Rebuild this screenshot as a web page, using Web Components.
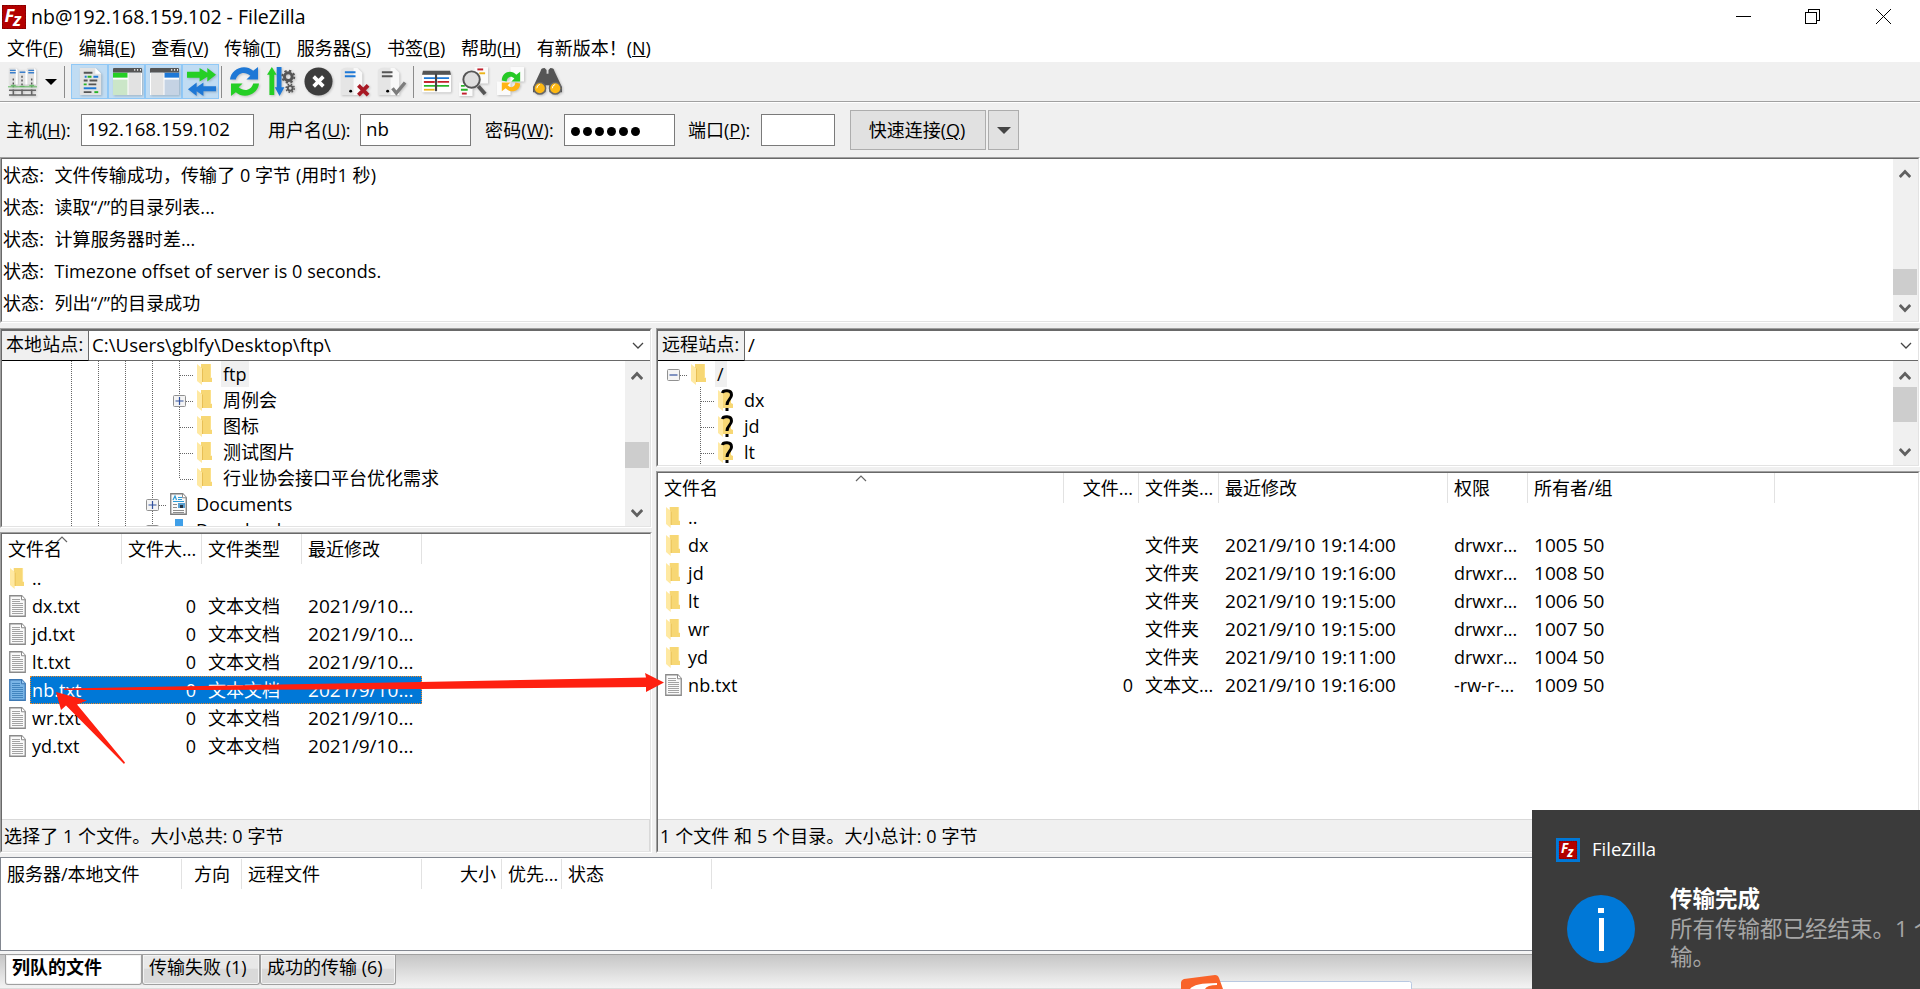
<!DOCTYPE html>
<html lang="zh-CN">
<head>
<meta charset="utf-8">
<title>nb@192.168.159.102 - FileZilla</title>
<style>
  html, body { margin: 0; height: 100%; }
  body {
    width: 1920px;
    height: 989px;
    overflow: hidden;
    background: #f0f0f0;
    color: #000;
    font: 18px/24px "Open Sans", "Noto Sans CJK SC", sans-serif;
  }
</style>
</head>
<body>
<fz-app></fz-app>

<script>
const ICONS = {
  logo: ['0 0 24 24', `
    <rect width="24" height="24" fill="#b30000"/>
    <rect x=".5" y=".5" width="23" height="23" fill="none" stroke="#7d0000" stroke-dasharray="2 1"/>
    <g fill="#fff" font-family="Open Sans" font-weight="700" font-style="italic">
      <text x="2.500" y="16.500" font-size="18">F</text><text x="11" y="21" font-size="18">z</text>
    </g>`],
  folder: ['0 0 15 21', `
    <path d="M4 0h9v13l2 1v4H4z" fill="#f7d774"/><path d="M13 0h1v13h-1z" fill="#fbe08a"/>
    <path d="M4 3l2 2v13H4z" fill="#e8bf55"/>
    <path d="M0 0l5 4v17l-5-4z" fill="#ffe9a2"/>`],
  unknown: ['0 0 15 21', `
    <path d="M4 0h9v13l2 1v4H4z" fill="#f7d774"/>
    <path d="M0 0l5 4v17l-5-4z" fill="#ffe9a2"/>
    <path d="M4.500 3C5 .300 13.500-.700 13.500 5c0 4-4.500 4.500-4.500 10" fill="none" stroke="#000" stroke-width="3"/>
    <path d="M7.500 18h3v3h-3z"/>`],
  text: ['0 0 17 22', `
    <path d="M.75.75h12l3.500 3.800v16.700H.75z" fill="#fafafa" stroke="#8a8a8a" stroke-width="1.300"/>
    <path d="M12.500.75v4h4" fill="#fff" stroke="#8a8a8a"/>
    <path d="M3 4.500h8M3 6.500h8M3 8.500h11M3 10.500h11M3 12.500h11M3 14.500h11M3 16.500h11M3 18.500h11" stroke="#a3a3a3"/>`],
  textsel: ['0 0 17 22', `
    <path d="M.75.75h12l3.500 3.800v16.700H.75z" fill="#7ab5e6" stroke="#3c78b4" stroke-width="1.300"/>
    <path d="M12.500.75v4h4" fill="#9ccaf0" stroke="#3c78b4"/>
    <path d="M3 4.500h8M3 6.500h8M3 8.500h11M3 10.500h11M3 12.500h11M3 14.500h11M3 16.500h11M3 18.500h11" stroke="#4285bf"/>`],
  documents: ['0 0 17 22', `
    <path d="M.75.75h12l3.500 3.800v16.700H.75z" fill="#fafafa" stroke="#7d7d7d" stroke-width="1.300"/>
    <path d="M12.500.75v4h4" fill="#fff" stroke="#8a8a8a"/>
    <path d="M3 7l2-4 1.500 4M8 4.500h4M8 6.500h4M3 8.500h11" fill="none" stroke="#2e9bd6" stroke-width="1.200"/>
    <path d="M8 10h7v5H8z" fill="#5a9fd0"/><path d="M10 12h3v3h-3z" fill="#234"/>
    <path d="M3 11.500h4M3 14.500h4M3 17.500h11M3 19.500h11" stroke="#8c8c8c"/>`],
  downloads: ['0 0 17 22', `<path d="M5 0h8v9h4l-8 8-9-8h5z" fill="#3f9fe8"/>`],
  site: ['0 0 30 30', `
    <g fill="#e2e2e2"><path d="M1 1h7l2 2v15H1zM11 3h7l2 2v13h-9zM20 1h7l2 2v15h-9z"/></g>
    <path d="M8 1l2 2v15H8zM18 3l2 2v13h-2zM27 1l2 2v15h-2z" fill="#fff"/>
    <path d="M2 3.500h6M2 6h6M12 5.500h6M21 3.500h6M21 6h6" stroke="#3b7fcb" stroke-width="1.500"/>
    <path d="M5.500 12v9M14.500 9v12M24.500 12v9" stroke="#555" stroke-width="1.500" stroke-dasharray="2 2"/>
    <path d="M3 19h5M12 20h5M22 19h5M0 20.500h30" stroke="#59b759"/>
    <path d="M5.500 23v6M14.500 23v6M24.500 23v6M1 24h28M1 29h28" stroke="#666" stroke-width="1.600"/>`],
  log: ['0 0 30 30', `
    <path d="M4 1h16l6 6v22H4z" fill="#e3e3e3"/><path d="M20 1l6 6h-6z" fill="#fff"/>
    <path d="M8 6h9M8 14h4" stroke="#555" stroke-width="2"/><path d="M9 10h2M18 10h5" stroke="#1e78d6" stroke-width="2"/>
    <path d="M12 10h4M8 18h3" stroke="#28b428" stroke-width="2"/><path d="M14 14h8M13 18h8M8 26h8" stroke="#555" stroke-width="2"/>
    <path d="M8 22h13" stroke="#1e78d6" stroke-width="2"/><path d="M19 26h4" stroke="#28b428" stroke-width="2"/>`],
  local: ['0 0 30 30', `
    <path d="M0 2q0-1 1-1h28q1 0 1 1v4H0z" fill="#555"/>
    <path d="M22 3h1M25 3h1M28 3h1" stroke="#fff" stroke-width="2"/>
    <path d="M0 6h30v23H0z" fill="#fff"/><path d="M0 6h15v5H0z" fill="#25cf25"/>
    <path d="M0 13h15v16H0z" fill="#cbe6c8"/><path d="M16 6h13v23H16z" fill="#e2e2e2"/>`],
  remote: ['0 0 30 30', `
    <path d="M0 2q0-1 1-1h28q1 0 1 1v4H0z" fill="#555"/>
    <path d="M22 3h1M25 3h1M28 3h1" stroke="#fff" stroke-width="2"/>
    <path d="M0 6h30v23H0z" fill="#fff"/><path d="M1 6h13v23H1z" fill="#e2e2e2"/>
    <path d="M15 6h15v5H15z" fill="#1e78d6"/><path d="M15 13h15v16H15z" fill="#c5d3e4"/>`],
  queue: ['0 0 30 30', `
    <path d="M0 5h13V1l8 5V1l9 7-9 7v-5l-8 5v-4H0z" fill="#25cf25"/>
    <path d="M30 20H17v-4l-7 5v-5l-9 7 9 7v-5l7 5v-5h13z" fill="#1e78d6"/>`],
  refresh: ['0 0 30 30', `
    <path d="M0 13C1 2 15-4 24 4l5-4v13H17l4-4C15 4 8 6 6 13z" fill="#1e78d6"/>
    <path d="M30 17c-1 11-15 17-24 9l-5 4V17h12l-4 4c6 5 13 3 15-4z" fill="#25cf25"/>`],
  process: ['0 0 30 30', `
    <path d="M5 0l5 8H7.500v21h-5V8H0z" fill="#25cf25"/><path d="M10 0h5v21h3l-5 9-5-9h2z" fill="#1e78d6"/>
    <g fill="none" stroke="#555"><circle cx="22" cy="10" r="4" stroke-width="3"/>
    <circle cx="22" cy="10" r="6.200" stroke-width="2" stroke-dasharray="2.430 2.430"/>
    <circle cx="24" cy="22" r="2.500" stroke-width="2"/><circle cx="24" cy="22" r="4.200" stroke-width="1.500" stroke-dasharray="1.650 1.650"/></g>`],
  cancel: ['0 0 30 30', `<circle cx="15" cy="15" r="14.500" fill="#3d3d3d"/>
    <path d="M10 10l10 10M20 10L10 20" stroke="#fff" stroke-width="3.800"/>`],
  disconnect: ['0 0 30 30', `
    <path d="M0 3q3-3 7-2h10v28H0z" fill="#e5e5e5"/><path d="M13 1h4l5 5v23h-9z" fill="#f9f9f9"/>
    <path d="M4 5.500h11M4 9.500h11" stroke="#1e78d6" stroke-width="2"/><circle cx="10" cy="25" r="1.500"/>
    <path d="M18 19l10 10M28 19L18 29" stroke="#a81824" stroke-width="4"/>`],
  reconnect: ['0 0 30 30', `
    <path d="M0 3q3-3 7-2h10v28H0z" fill="#e5e5e5"/><path d="M13 1h4l5 5v23h-9z" fill="#f9f9f9"/>
    <path d="M4 5.500h11M4 9.500h11" stroke="#555" stroke-width="2"/><circle cx="10" cy="25" r="1.500"/>
    <path d="M15 22l4 5 9-11" fill="none" stroke="#7d7d7d" stroke-width="3.500"/>`],
  filter: ['0 0 30 30', `
    <path d="M0 8h30v17q0 1-1 1H1q-1 0-1-1z" fill="#fff"/><path d="M1 4h28l1 4H0z" fill="#555"/>
    <path d="M2 11.500h26" stroke="#1e78d6" stroke-width="1.800"/><path d="M2 15.500h11" stroke="#c3202c" stroke-width="1.800"/>
    <path d="M16 15.500h12M2 15.500h11" stroke="#c3202c" stroke-width="1.800"/>
    <path d="M2 19.500h26" stroke="#28b428" stroke-width="1.800"/>
    <path d="M2 23.500h11" stroke="#ecb41b" stroke-width="1.800"/><path d="M14.500 7v18" stroke="#444" stroke-width="2.200"/>`],
  compare: ['0 0 30 30', `
    <path d="M16 0h14v17H16zM0 16h14v14H0z" fill="#fbfbfb"/>
    <path d="M19 2.500h6" stroke="#c3202c" stroke-width="2"/><path d="M21 6.500h6" stroke="#ecb41b" stroke-width="2"/>
    <path d="M2 19.500h4M2 23.500h7" stroke="#28b428" stroke-width="2"/><path d="M3 27.500h5" stroke="#c3202c" stroke-width="2"/>
    <circle cx="13" cy="13" r="8.500" fill="#dedede" stroke="#555" stroke-width="2"/>
    <path d="M20 20l7 8" stroke="#555" stroke-width="4"/>`],
  sync: ['0 0 30 30', `
    <path d="M15 0h14v15H15zM1 15h14v14H1z" fill="#fbfbfb"/>
    <path d="M6 14c0-9 10-12 15-6l4-3v10h-9l3-3c-4-4-8-1-8 3z" fill="#25c925"/>
    <path d="M25 17c0 8-10 11-15 5l-4 3V16h9l-3 3c4 4 8 1 8-3z" fill="#ffb414"/>`],
  find: ['0 0 30 30', `
    <path d="M0 21L8 4q0-3 4-3l2 2v4h2V3l2-2q4 0 4 3l8 17v5H17v-7h-4v7H0z" fill="#555"/>
    <circle cx="7" cy="22" r="6" fill="#fdb813" stroke="#666" stroke-width="1.500"/>
    <circle cx="23" cy="22" r="6" fill="#fdb813" stroke="#666" stroke-width="1.500"/>
    <path d="M4 22q0-3 3-4M20 22q0-3 3-4" fill="none" stroke="#fff"/>`],
};

class FzIcon extends HTMLElement {
  connectedCallback() {
    const [box, body] = ICONS[this.getAttribute('name')];
    this.attachShadow({ mode: 'open' }).innerHTML = `
      <style>
        :host { display: block; flex: none; }
        svg { display: block; width: 100%; height: 100%; overflow: visible; }
      </style>
      <svg viewBox="${box}" preserveAspectRatio="none">${body}</svg>
    `;
  }
}

class FzTitleBar extends HTMLElement {
  connectedCallback() {
    this.attachShadow({ mode: 'open' }).innerHTML = `
      <style>
        :host { display: flex; align-items: center; height: 34px; background: #fff; font-size: 19.500px; }
        fz-icon { width: 24px; height: 24px; margin: 0 5px 0 2px; }
        .text { flex: 1; }
        svg { display: block; margin-bottom: 2px; }
      </style>
      <fz-icon name="logo"></fz-icon>
      <div class="text"><slot></slot></div>
      <svg width="184" height="32" viewBox="1736 0 184 32" fill="none" stroke="#000" shape-rendering="crispEdges">
        <path d="M1736 16.500h15M1805.500 12.500h11v11h-11zM1808.500 12v-2.500h11v11h-3"/>
        <path d="M1876 9l15 15M1891 9l-15 15" shape-rendering="auto"/>
      </svg>
    `;
  }
}

class FzMenuBar extends HTMLElement {
  connectedCallback() {
    this.attachShadow({ mode: 'open' }).innerHTML = `
      <style>
        :host { display: flex; align-items: center; gap: 15.800px; height: 28px; padding-left: 7px; background: #fff; white-space: pre; }
        ::slotted(*) { display: block; }
      </style>
      <slot></slot>
    `;
  }
}

class FzToolButton extends HTMLElement {
  connectedCallback() {
    this.attachShadow({ mode: 'open' }).innerHTML = `
      <style>
        :host { display: flex; align-items: center; justify-content: center; width: 37px; height: 35px; box-sizing: border-box; }
        :host([pressed]) { padding-left: 1px; background: #c0dcf3; border: 1px solid #90c8f6; }
        fz-icon { width: 29px; height: 29px; filter: drop-shadow(1px 1px 1px rgba(0, 0, 0, .2)); }
      </style>
      <fz-icon name="${this.getAttribute('icon')}"></fz-icon>
    `;
  }
}

class FzToolBar extends HTMLElement {
  connectedCallback() {
    this.attachShadow({ mode: 'open' }).innerHTML = `
      <style>
        :host { display: flex; align-items: center; height: 39px; padding-left: 4px; border-bottom: 1px solid #a0a0a0; box-shadow: 0 1px #fff; margin-bottom: 1px; }
        i { width: 1px; height: 32px; background: #8c8c8c; }
        .drop { border: 6px solid transparent; border-top: 6px solid #000; border-bottom: 0; margin: 0 7px 0 4px; }
      </style>
      <fz-tool-button icon="site"></fz-tool-button><span class="drop"></span>
      <i></i><span style="width:6px"></span>
      ${['log', 'local', 'remote', 'queue'].map(n => `<fz-tool-button pressed icon="${n}"></fz-tool-button>`).join('')}
      <span style="width:2px"></span><i></i><span style="width:4px"></span>
      ${['refresh', 'process', 'cancel', 'disconnect', 'reconnect'].map(n => `<fz-tool-button icon="${n}"></fz-tool-button>`).join('')}
      <span style="width:2px"></span><i></i><span style="width:4px"></span>
      ${['filter', 'compare', 'sync', 'find'].map(n => `<fz-tool-button icon="${n}"></fz-tool-button>`).join('')}
    `;
  }
}

class FzField extends HTMLElement {
  connectedCallback() {
    this.attachShadow({ mode: 'open' }).innerHTML = `
      <style>
        :host { display: flex; align-items: center; justify-content: space-between; }
        .box { box-sizing: border-box; width: var(--box); height: 32px; padding: 2px 5px; border: 1px solid #7a7a7a; background: #fff; font-size: 18.700px; }
        .dots { display: flex; gap: 3px; padding: 12px 6px 0; }
        .dots b { width: 9px; height: 9px; border-radius: 50%; background: #000; }
      </style>
      <span><slot></slot></span>
      ${this.hasAttribute('dots')
        ? `<div class="box dots">${'<b></b>'.repeat(6)}</div>`
        : `<div class="box">${this.getAttribute('value') || ''}</div>`}
    `;
  }
}

class FzQuickConnect extends HTMLElement {
  connectedCallback() {
    this.attachShadow({ mode: 'open' }).innerHTML = `
      <style>
        :host { display: flex; align-items: center; height: 54px; }
        button { box-sizing: border-box; height: 40px; padding: 0; border: 1px solid #adadad; background: #e1e1e1; font: inherit; color: inherit; }
        .go { width: 136px; padding-right: 2px; margin-left: 15px; }
        .more { display: flex; align-items: center; justify-content: center; width: 31px; margin-left: 2px; }
        .more::after { content: ""; border: 7px solid transparent; border-top-color: #444; border-bottom: 0; }
      </style>
      <fz-field style="width:248px;margin-left:6px;--box:173px" value="192.168.159.102">主机(<u>H</u>):</fz-field>
      <fz-field style="width:203px;margin-left:14px;--box:111px" value="nb">用户名(<u>U</u>):</fz-field>
      <fz-field style="width:190px;margin-left:14px;letter-spacing:.15px;--box:111px" dots>密码(<u>W</u>):</fz-field>
      <fz-field style="width:147px;margin-left:13px;--box:74px">端口(<u>P</u>):</fz-field>
      <button class="go">快速连接(<u>Q</u>)</button><button class="more"></button>
    `;
  }
}

/* Sunken 3D frame shared by the log, the trees and the lists */
class FzPane extends HTMLElement {
  connectedCallback() {
    this.attachShadow({ mode: 'open' }).innerHTML = `
      <style>
        :host { display: block; box-sizing: border-box; border: 1px solid; border-color: #a0a0a0 #fff #fff #a0a0a0; }
        .in { display: flex; flex-direction: column; box-sizing: border-box; height: 100%; overflow: hidden; background: #fff; border: 1px solid; border-color: #696969 #e3e3e3 #e3e3e3 #696969; }
      </style>
      <div class="in"><slot></slot></div>
    `;
  }
}

class FzScrollBar extends HTMLElement {
  connectedCallback() {
    this.attachShadow({ mode: 'open' }).innerHTML = `
      <style>
        :host { display: flex; flex-direction: column; justify-content: space-between; align-items: center; box-sizing: border-box; flex: none; width: 25px; padding: 10px 1px 8px 0; background: #f0f0f0; position: relative; }
        svg { display: block; }
        .thumb { position: absolute; left: 0; right: 1px; top: ${this.getAttribute('top')}px; height: ${this.getAttribute('size')}px; background: #cdcdcd; }
      </style>
      <svg width="12" height="9" fill="none" stroke="#606060" stroke-width="2.800"><path d="M.8 8L6 2.500 11.200 8"/></svg>
      <div class="thumb"></div>
      <svg width="12" height="9" fill="none" stroke="#606060" stroke-width="2.800"><path d="M.8 1L6 6.500 11.200 1"/></svg>
    `;
  }
}

class FzLog extends HTMLElement {
  connectedCallback() {
    const rows = ['文件传输成功，传输了 0 字节 (用时1 秒)', '读取“/”的目录列表...', '计算服务器时差...',
      'Timezone offset of server is 0 seconds.', '列出“/”的目录成功'];
    this.attachShadow({ mode: 'open' }).innerHTML = `
      <style>
        :host { display: flex; flex: 1; min-height: 0; letter-spacing: .07px; }
        .rows { flex: 1; padding: 1px 0 0 1px; }
        .row { display: grid; grid-template-columns: 51.500px 1fr; height: 32px; line-height: 31px; }
      </style>
      <div class="rows">${rows.map(r => `<div class="row"><span>状态:</span><span>${r}</span></div>`).join('')}</div>
      <fz-scroll-bar top="110" size="26"></fz-scroll-bar>
    `;
  }
}

class FzPathBar extends HTMLElement {
  connectedCallback() {
    this.attachShadow({ mode: 'open' }).innerHTML = `
      <style>
        :host { display: flex; flex: none; box-sizing: border-box; height: 31px; border-top: 1px solid #696969; line-height: 27px; }
        .label { box-sizing: border-box; width: 87px; padding-left: 4px; background: #f0f0f0; border-right: 1px solid #696969; border-bottom: 1px solid #000; white-space: nowrap; letter-spacing: .1px; }
        .path { flex: 1; display: flex; justify-content: space-between; align-items: center; padding: 0 6px 0 3px; border-bottom: 1px solid #696969; font-size: 18.700px; }
        .text { margin-top: -2px; }
      </style>
      <div class="label">${this.getAttribute('label')}</div>
      <div class="path"><span class="text"><slot></slot></span><svg width="12" height="8" fill="none" stroke="#444" stroke-width="1.300"><path d="M1 1l5 5 5-5"/></svg></div>
    `;
  }
}

/* Each node: [guides, icon, label, selected]. Guides: "|" line, "T" tee, "L" last, "+" / "-" expander */
class FzTree extends HTMLElement {
  set nodes(list) {
    const dot = 'stroke="#666" stroke-dasharray="1 1"';
    const box = sign => `<rect x="7.500" y="8.500" width="12" height="11" rx="1" fill="#f4f4f4" stroke="#919191"/>
      <path d="M9.500 14h8${sign === '+' ? 'M13.500 10v8' : ''}" stroke="#31509c" stroke-width="1.200"/>`;
    const cell = c => `<svg width="27" height="26" fill="none">
      ${'|T+'.includes(c) ? `<path d="M13.500 0v26" ${dot}/>` : ''}
      ${c === 'L' ? `<path d="M13.500 0v14" ${dot}/>` : ''}
      ${'TL+-'.includes(c) ? `<path d="M14 14.500h14" ${dot}/>` : ''}
      ${'+-'.includes(c) ? box(c) : ''}</svg>`;
    this.attachShadow({ mode: 'open' }).innerHTML = `
      <style>
        :host { display: flex; flex: 1; min-height: 0; }
        .rows { flex: 1; overflow: hidden; }
        .row { display: flex; align-items: center; height: 26px; padding-left: var(--indent); }
        svg { flex: none; display: block; }
        .ico { width: 28px; display: flex; padding-left: 4px; box-sizing: border-box; }
        fz-icon { width: 15px; height: 21px; }
        .wide fz-icon { width: 17px; height: 22px; }
        .name { padding: 0 3px 0 2px; height: 26px; line-height: 27px; }
        .sel { background: #f0f0f0; }
      </style>
      <div class="rows">${list.map(([guides, icon, name, sel]) => `
        <div class="row">${[...guides].map(g => g === ' ' ? '<svg width="27"></svg>' : cell(g)).join('')}
          <span class="ico ${icon[0] === 'd' ? 'wide' : ''}"><fz-icon name="${icon}"></fz-icon></span>
          <span class="name ${sel ? 'sel' : ''}">${name}</span></div>`).join('')}
      </div>
      <slot></slot>
    `;
  }
}

/* columns: [title, width, align]; rows: [icon, ...cells] */
class FzFileList extends HTMLElement {
  setData({ columns, rows = [], sort, selected }) {
    const align = i => columns[i][2] || 'left';
    const numeric = text => /^\d{4}/.test(text) ? 'num' : '';
    this.attachShadow({ mode: 'open' }).innerHTML = `
      <style>
        :host { display: block; flex: 1; min-height: 0; }
        .grid { display: grid; grid-template-columns: ${columns.map(c => c[1] + 'px').join(' ')}; width: max-content; white-space: nowrap; position: relative; }
        .head > * { height: 30px; line-height: 30px; border-right: 1px solid #e2e2e2; }
        .grid > * { box-sizing: border-box; padding: 0 5px 0 6px; }
        .right { text-align: right; }
        .row > .right { padding-right: 6px; }
        .center { text-align: center; }
        .row > * { height: 28px; line-height: 28px; }
        .row > .num { font-size: 19px; letter-spacing: .05px; }
        .row .file { display: flex; align-items: center; padding: 0 0 0 7px; }
        fz-icon { width: 17px; height: 22px; margin-right: 4px; }
        fz-icon[name=folder] { width: 14px; height: 21px; margin: 0 6px 0 1px; }
        .label { padding-left: 2px; letter-spacing: .1px; }
        .on { color: #fff; }
        .on::before { content: ""; position: absolute; left: 28px; right: 0; top: 0; bottom: 0; padding: 0; height: 28px; background: #0078d7; outline: 1px dotted #f08a28; outline-offset: -1px; }
        .on > * { position: relative; }
        .sort { position: absolute; left: ${sort - 6}px; top: 2px; padding: 0; height: 7px; border: 0; }
      </style>
      <div class="grid head">
        ${columns.map((c, i) => `<span class="${align(i)}">${c[0]}</span>`).join('')}
        ${sort ? '<svg class="sort" width="12" height="7" fill="none" stroke="#666" stroke-width="1.200"><path d="M1 6l5-5 5 5"/></svg>' : ''}
      </div>
      ${rows.map(([icon, name, ...cells], n) => `
        <div class="grid row ${n === selected ? 'on' : ''}">
          <span class="file"><fz-icon name="${icon}"></fz-icon><span class="label">${name}</span></span>
          ${cells.map((c, i) => `<span class="${align(i + 1)} ${numeric(c)}">${c}</span>`).join('')}
        </div>`).join('')}
    `;
  }
}

class FzStatusLine extends HTMLElement {
  connectedCallback() {
    this.attachShadow({ mode: 'open' }).innerHTML = `
      <style>
        :host { display: block; flex: none; box-sizing: border-box; height: 32px; padding-left: 2px; border-top: 1px solid #d9d9d9; border-right: 1px solid #d9d9d9; background: #f0f0f0; line-height: 32px; letter-spacing: .08px; }
      </style>
      <slot></slot>
    `;
  }
}

class FzTabs extends HTMLElement {
  connectedCallback() {
    this.attachShadow({ mode: 'open' }).innerHTML = `
      <style>
        :host { display: block; height: 38px; box-sizing: border-box; padding-top: 3px; background: #f4f4f4; }
        .strip { display: flex; align-items: flex-start; box-sizing: border-box; height: 35px; padding-left: 5px; border-top: 1px solid #a0a0a0; border-bottom: 1px solid #dcdcdc; background: linear-gradient(#c6c6c6, #f3f3f3); }
        span { box-sizing: border-box; height: 30px; padding-left: 6px; line-height: 25px; border: 1px solid #a0a0a0; border-top: 0; border-radius: 0 0 3px 3px; background: linear-gradient(#e8e8e8 45%, #d9d9d9 50%); box-shadow: inset 0 0 0 1px #f3f3f3; white-space: nowrap; }
        span:nth-child(1) { width: 137px; background: #fff; font-weight: bold; }
        span:nth-child(2) { width: 118px; }
        span:nth-child(3) { width: 136px; }
      </style>
      <div class="strip"><span>列队的文件</span><span>传输失败 (1)</span><span>成功的传输 (6)</span></div>
    `;
  }
}

class FzToast extends HTMLElement {
  connectedCallback() {
    this.attachShadow({ mode: 'open' }).innerHTML = `
      <style>
        :host { display: block; box-sizing: border-box; width: 388px; height: 179px; padding: 28px 0 0 24px; background: #3b3b3b; color: #fff; overflow: hidden; }
        .app { display: flex; align-items: center; gap: 12px; height: 24px; font-size: 18.500px; }
        .app .title { margin-top: -3px; }
        .mark { padding: 3px; background: #0078d7; }
        .mark fz-icon { width: 18px; height: 18px; }
        .main { display: flex; padding: 20px 0 0 11px; }
        .info { flex: none; display: flex; flex-direction: column; align-items: center; gap: 5px; box-sizing: border-box; width: 68px; height: 68px; margin: 13px 35px 0 0; padding-top: 13px; border-radius: 50%; background: #0078d7; }
        .info i { width: 6px; height: 5px; background: #fff; }
        .info i + i { width: 5px; height: 33px; }
        .copy { font-size: 22.500px; line-height: 28px; white-space: nowrap; }
        b { display: block; line-height: 33px; }
        .body { color: #a6a6a6; }
      </style>
      <div class="app"><span class="mark"><fz-icon name="logo"></fz-icon></span><span class="title">FileZilla</span></div>
      <div class="main">
        <div class="info"><i></i><i></i></div>
        <div class="copy"><b>传输完成</b><div class="body">所有传输都已经结束。1 个<br>输。</div></div>
      </div>
    `;
  }
}

class FzApp extends HTMLElement {
  connectedCallback() {
    const root = this.attachShadow({ mode: 'open' });
    root.innerHTML = `
      <style>
        :host { display: flex; flex-direction: column; position: relative; width: 1920px; height: 989px; overflow: hidden; }
        .log { height: 166px; }
        .sites { display: grid; grid-template-columns: 652px 1fr; column-gap: 4px; height: 525px; margin: 5px 0 4px; }
        .site { display: flex; flex-direction: column; gap: 4px; min-height: 0; }
        .queue { display: flex; box-sizing: border-box; height: 94px; padding-top: 1px; border: 1px solid #828790; background: #fff; }
        .toast { position: absolute; left: 1532px; top: 810px; }
        .ime, .marks { position: absolute; left: 0; top: 0; pointer-events: none; }
      </style>
      <fz-title-bar>nb@192.168.159.102 - FileZilla</fz-title-bar>
      <fz-menu-bar>
        <span>文件(<u>F</u>)</span><span>编辑(<u>E</u>)</span><span>查看(<u>V</u>)</span><span>传输(<u>T</u>)</span><span>服务器(<u>S</u>)</span><span>书签(<u>B</u>)</span><span>帮助(<u>H</u>)</span><span>有新版本！(<u>N</u>)</span>
      </fz-menu-bar>
      <fz-tool-bar></fz-tool-bar>
      <fz-quick-connect></fz-quick-connect>
      <fz-pane class="log"><fz-log></fz-log></fz-pane>
      <div class="sites">
        <div class="site">
          <fz-pane style="height:200px">
            <fz-path-bar label="本地站点:">C:\\Users\\gblfy\\Desktop\\ftp\\</fz-path-bar>
            <fz-tree id="localTree" style="--indent:56px"><fz-scroll-bar top="81" size="26"></fz-scroll-bar></fz-tree>
          </fz-pane>
          <fz-pane style="height:321px">
            <fz-file-list id="localList"></fz-file-list>
            <fz-status-line>选择了 1 个文件。大小总共: 0 字节</fz-status-line>
          </fz-pane>
        </div>
        <div class="site">
          <fz-pane style="height:139px">
            <fz-path-bar label="远程站点:">/</fz-path-bar>
            <fz-tree id="remoteTree" style="--indent:2px"><fz-scroll-bar top="26" size="35"></fz-scroll-bar></fz-tree>
          </fz-pane>
          <fz-pane style="height:382px">
            <fz-file-list id="remoteList"></fz-file-list>
            <fz-status-line>1 个文件 和 5 个目录。大小总计: 0 字节</fz-status-line>
          </fz-pane>
        </div>
      </div>
      <div class="queue"><fz-file-list id="queueList"></fz-file-list></div>
      <fz-tabs></fz-tabs>
      <svg class="ime" width="1920" height="989">
        <rect x="1200.500" y="981.500" width="211" height="12" rx="2" fill="#fff" stroke="#b9c9e2"/>
        <path d="M1181 983q0-3 3-4l31-4q3 0 4 3l4 11h-42z" fill="#f9632a"/>
        <path d="M1190 989q4-6 27-6v2q-10 0-12 4z" fill="#fff"/>
      </svg>
      <svg class="marks" width="1920" height="989" fill="#fe2010">
        <path d="M64 688.500L280 684.500 420 682 646 677.500 645 673 664 682.500 646 692 646 687 420 689 200 690 64 690z"/>
        <path d="M56 692L87 700.500 77 704.500 125 762.500 124 764 66 705.500 61 710z"/>
      </svg>
      <fz-toast class="toast"></fz-toast>
    `;

    root.getElementById('localTree').nodes = [
      ['||||T', 'folder', 'ftp', true],
      ['||||+', 'folder', '周例会'],
      ['||||T', 'folder', '图标'],
      ['||||T', 'folder', '测试图片'],
      ['||||L', 'folder', '行业协会接口平台优化需求'],
      ['|||+', 'documents', 'Documents'],
      ['|||+', 'downloads', 'Downloads'],
    ];
    root.getElementById('remoteTree').nodes = [
      ['-', 'folder', '/', true],
      [' T', 'unknown', 'dx'],
      [' T', 'unknown', 'jd'],
      [' T', 'unknown', 'lt'],
    ];
    root.getElementById('localList').setData({
      columns: [['文件名', 120], ['文件大...', 80, 'right'], ['文件类型', 100], ['最近修改', 120]],
      sort: 60,
      selected: 4,
      rows: [['folder', '..', '', '', ''],
        ...['dx', 'jd', 'lt', 'nb', 'wr', 'yd'].map(n =>
          [n === 'nb' ? 'textsel' : 'text', `${n}.txt`, '0', '文本文档', '2021/9/10...'])],
    });
    const dir = (name, time, owner) => ['folder', name, '', '文件夹', `2021/9/10 ${time}`, 'drwxr...', owner];
    root.getElementById('remoteList').setData({
      columns: [['文件名', 406], ['文件...', 75, 'right'], ['文件类...', 80], ['最近修改', 229], ['权限', 80], ['所有者/组', 247]],
      sort: 203,
      rows: [
        ['folder', '..', '', '', '', '', ''],
        dir('dx', '19:14:00', '1005 50'),
        dir('jd', '19:16:00', '1008 50'),
        dir('lt', '19:15:00', '1006 50'),
        dir('wr', '19:15:00', '1007 50'),
        dir('yd', '19:11:00', '1004 50'),
        ['text', 'nb.txt', '0', '文本文...', '2021/9/10 19:16:00', '-rw-r-...', '1009 50'],
      ],
    });
    root.getElementById('queueList').setData({
      columns: [['服务器/本地文件', 181], ['方向', 60, 'center'], ['远程文件', 180], ['大小', 80, 'right'], ['优先...', 60], ['状态', 150]],
    });
  }
}

customElements.define('fz-icon', FzIcon);
customElements.define('fz-title-bar', FzTitleBar);
customElements.define('fz-menu-bar', FzMenuBar);
customElements.define('fz-tool-button', FzToolButton);
customElements.define('fz-tool-bar', FzToolBar);
customElements.define('fz-field', FzField);
customElements.define('fz-quick-connect', FzQuickConnect);
customElements.define('fz-pane', FzPane);
customElements.define('fz-scroll-bar', FzScrollBar);
customElements.define('fz-log', FzLog);
customElements.define('fz-path-bar', FzPathBar);
customElements.define('fz-tree', FzTree);
customElements.define('fz-file-list', FzFileList);
customElements.define('fz-status-line', FzStatusLine);
customElements.define('fz-tabs', FzTabs);
customElements.define('fz-toast', FzToast);
customElements.define('fz-app', FzApp);
</script>
</body>
</html>
